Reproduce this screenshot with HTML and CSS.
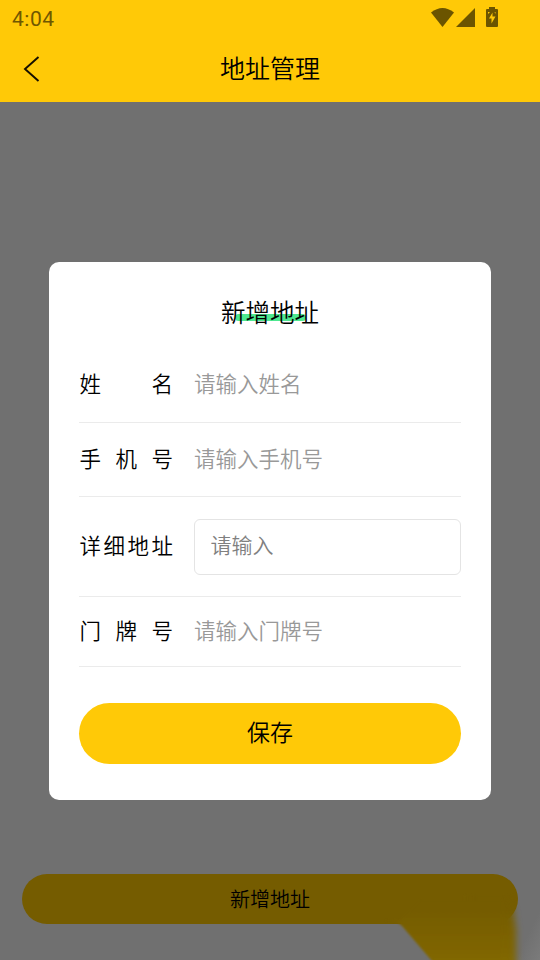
FILE: index.html
```html
<!DOCTYPE html>
<html lang="zh-CN">
<head>
<meta charset="utf-8">
<title>地址管理</title>
<link rel="stylesheet" href="styles.css">
</head>
<body>
<div class="screen">
  <header class="header">
    <div class="status">
      <span class="clock">4:04</span>
      <svg class="status-icons" width="70" height="22" viewBox="0 0 70 22" fill="#6b5400">
        <path d="M1 5.500Q12.500-3.500 24 5.500L12.500 20Z"/>
        <path d="M45 1V20H26Z"/>
        <path fill-rule="evenodd" d="M59 0h6v2h2q1 0 1 1v16q0 1-1 1H57q-1 0-1-1V3q0-1 1-1h2ZM62.500 5.500l-3.500 6h2.500v5l4-7H62.500ZM58 5v2l2-2ZM64.500 5l1 2v-2Z"/>
      </svg>
    </div>
    <div class="nav">
      <svg class="back" width="20" height="28" viewBox="0 0 20 28" fill="none" stroke="#160f00" stroke-width="1.900"><path d="M16.500 2L3 14L16.500 26"/></svg>
      <h1>地址管理</h1>
    </div>
  </header>
  <main class="body">
    <section class="modal">
      <h2><span>新增地址</span></h2>
      <div class="row"><label>姓名</label><span class="hint">请输入姓名</span></div>
      <div class="row"><label>手机号</label><span class="hint">请输入手机号</span></div>
      <div class="row row-detail"><label>详细地址</label><div class="box">请输入</div></div>
      <div class="row row-door"><label>门牌号</label><span class="hint">请输入门牌号</span></div>
      <button class="save">保存</button>
    </section>
    <button class="add">新增地址</button>
    <svg class="smear" width="180" height="110" viewBox="0 0 180 110">
      <defs>
        <linearGradient id="gold" gradientUnits="userSpaceOnUse" x1="0" y1="60" x2="0" y2="110"><stop offset="0" stop-color="#755c00"/><stop offset="1" stop-color="#816704"/></linearGradient>
        <linearGradient id="glow" x1="0" x2="1" y1="0" y2="1"><stop offset="0.500" stop-color="#7b7b7b" stop-opacity="0"/><stop offset="1" stop-color="#7b7b7b"/></linearGradient>
        <filter id="soft" x="-10%" y="-10%" width="120%" height="130%"><feGaussianBlur stdDeviation="1.200"/></filter>
        <filter id="softer" x="-50%" y="-10%" width="200%" height="130%"><feGaussianBlur stdDeviation="3.500 1"/></filter>
      </defs>
      <path d="M155 60H180V110H155Z" fill="url(#glow)"/>
      <path d="M110 45H149L153 58L156 80V130H110Z" fill="url(#gold)" filter="url(#softer)"/>
      <path d="M24 71H34Q38 72 42 76L78 118H142V50H60L40 70Z" fill="url(#gold)" filter="url(#soft)"/>
    </svg>
  </main>
</div>
</body>
</html>
```
FILE: styles.css
```css
* { box-sizing: border-box; }
body { margin: 0; font-family: "Noto Sans CJK SC", sans-serif; font-weight: 350; color: #000; }
.screen { width: 540px; height: 960px; display: flex; flex-direction: column; overflow: hidden; background: #707070; }
.header { height: 102px; background: #ffc907; }
.status { height: 38px; padding: 0 40px 0 12px; display: flex; align-items: center; justify-content: space-between; }
.clock { font: 400 21px/36px Roboto, sans-serif; letter-spacing: 0.500px; color: #705700; }
.status-icons { margin-top: -2px; }
.nav { height: 64px; display: grid; grid-template-columns: 60px 1fr 60px; }
.back { margin: 17px 0 0 22px; }
h1, h2 { margin: 0; font-weight: 350; text-align: center; }
h1 { font-size: 25px; line-height: 58px; }
.body { position: relative; flex: 1; padding: 160px 22px 36px; display: flex; flex-direction: column; align-items: center; }
.modal { width: 442px; height: 538px; padding: 32px 30px 36px; border-radius: 10px; background: #fff; }
h2 { height: 54px; font-size: 24.500px; line-height: 36px; }
h2 span { position: relative; z-index: 0; display: inline-block; }
h2 span::before { content: ""; position: absolute; z-index: -1; left: 14px; top: 20px; width: 71px; height: 7px; border-radius: 4px; background: #4ee890; }
.row { height: 74.500px; padding-bottom: 3px; display: flex; align-items: center; border-bottom: 1px solid #ebebeb; font-size: 21.500px; line-height: 32px; }
label { width: 94px; margin-right: 21px; padding-left: 0.500px; text-align-last: justify; }
.hint { color: #999; }
.row-detail { height: 100px; padding-bottom: 0; }
.row-detail label { padding-bottom: 4px; }
.row-door { height: 70px; padding-bottom: 4px; }
.box { flex: 1; height: 56px; padding: 0 15.500px; border: 1px solid #e4e4e4; border-radius: 6px; font-size: 21px; line-height: 48px; color: #808080; }
button { display: block; border: 0; padding: 0; font-family: inherit; font-weight: 350; color: #000; }
.save { width: 382px; height: 61px; margin-top: 36px; padding-bottom: 4px; border-radius: 31px; background: #ffc907; font-size: 23px; line-height: 57px; }
.add { width: 496px; height: 50px; margin-top: 74px; border-radius: 25px; background: #755c00; font-size: 20px; line-height: 48px; }
.smear { position: absolute; right: 0; bottom: 0; }
```
